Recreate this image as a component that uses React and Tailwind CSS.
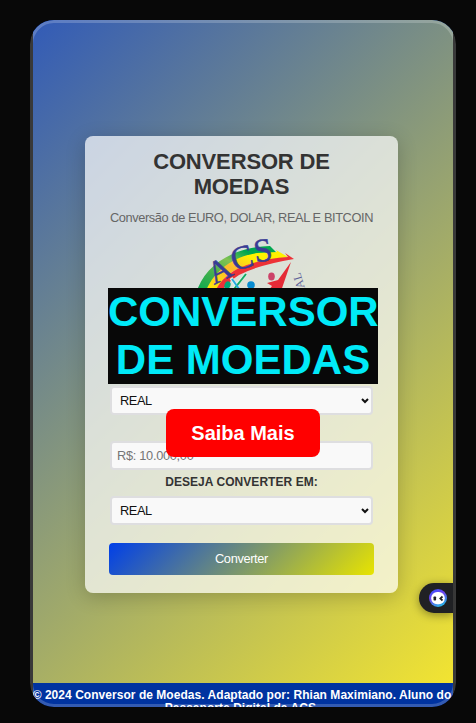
import React from 'react';

function Chevron() {
  return (
    <svg className="h-[6px] w-[8px] shrink-0" viewBox="0 0 8 6" fill="none" stroke="#111" strokeWidth="2">
      <path d="M1 1l3 3 3-3" />
    </svg>
  );
}

function SelectField({ value }) {
  return (
    <div className="flex h-[29px] items-center justify-between rounded-[4px] border-2 border-[#dedee0] bg-[#f9f9f9] pr-[2px] pl-2 text-[12.8px] tracking-[-0.4px] text-[#111]">
      <span>{value}</span>
      <Chevron />
    </div>
  );
}

function Logo() {
  return (
    <svg className="ml-[70px] block h-[120px] w-[140px]" viewBox="180 225 140 120">
      <defs>
        <linearGradient id="leaf" x1="0" y1="1" x2="1" y2="0">
          <stop offset="0" stopColor="#00a650" />
          <stop offset=".3" stopColor="#3fb04c" />
          <stop offset=".55" stopColor="#82c252" />
          <stop offset=".75" stopColor="#00a650" />
        </linearGradient>
        <linearGradient id="sun" x1="0" y1="1" x2="1" y2="0">
          <stop offset="0" stopColor="#fff200" />
          <stop offset=".45" stopColor="#fdb92e" />
          <stop offset=".7" stopColor="#fff200" />
        </linearGradient>
      </defs>
      <path d="M196 294C202 272 220 256 247 249Q260 246 270 246L277 253Q250 255 232 263Q215 272 206 294Z" fill="url(#leaf)" />
      <path d="M205 294C212 272 232 257 257 253L277 252L276 250L288 257Q250 262 232 272Q220 280 216 294Z" fill="url(#sun)" />
      <path d="M214 294Q220 278 239 268Q260 259 288 257L285 253L294 259Q258 265 239 275Q226 283 220 294Z" fill="#ed3237" />
      <path d="M291 262L280 294H266L272 286L267 283L278 280Z" fill="#e52b36" />
      <ellipse cx="271.5" cy="276.5" rx="3.3" ry="4" fill="#cc4269" />
      <ellipse cx="227.5" cy="285" rx="3" ry="4" fill="#00a878" transform="rotate(20 227 285)" />
      <circle cx="251" cy="285" r="3.8" fill="#078bd0" />
      <path d="M246 274L229 294M231 278L242 294" stroke="#d9f3ec" strokeWidth="3.4" />
      <path d="M246 274L231 293" stroke="#16aa62" strokeWidth="2" />
      <path d="M232 279L242 293" stroke="#26a9e0" strokeWidth="2" />
      <g fill="#393b94" stroke="#393b94" strokeWidth=".5" fontFamily="'Liberation Serif', serif">
        <text transform="translate(214 285) rotate(-27)" fontSize="32">A</text>
        <text transform="translate(234 271) rotate(-15)" fontSize="33">C</text>
        <text transform="translate(255.5 262.5) rotate(-9)" fontSize="33">S</text>
      </g>
      <text transform="translate(306 291) rotate(-107)" fontSize="12" fill="#5c5f98" fontFamily="'Liberation Serif', serif">IAL</text>
    </svg>
  );
}

function ChatTab() {
  return (
    <div className="absolute top-[563px] right-[3px] flex h-[30px] w-[34px] items-center rounded-l-full bg-[#202124] pl-[10px] shadow-[0_2px_10px_rgba(0,0,0,0.4)]">
      <svg className="h-[18px] w-[18px]" viewBox="0 0 18 18">
        <defs>
          <linearGradient id="ring" x1="0.2" y1="0" x2="0.7" y2="1">
            <stop offset="0" stopColor="#3652ff" />
            <stop offset=".4" stopColor="#7043ee" />
            <stop offset="1" stopColor="#22bde6" />
          </linearGradient>
        </defs>
        <circle cx="9" cy="9" r="9" fill="url(#ring)" />
        <rect x="2.2" y="3" width="13.6" height="12.2" rx="6" fill="#fff" />
        <rect x="4.5" y="7.5" width="2.6" height="4" rx=".8" fill="#202124" />
        <path d="M13.5 7.5l-2.2 2 2.2 2" stroke="#202124" strokeWidth="1.7" fill="none" />
      </svg>
    </div>
  );
}

export default function App() {
  return (
    <div className="h-[723px] w-[476px] overflow-hidden bg-[#080808] pt-5 pl-[30px] font-['Liberation_Sans',Arial,sans-serif]">
      <div className="relative h-[687px] w-[426px] overflow-hidden rounded-[24px] px-[3px]">
        <div className="h-full overflow-hidden bg-[#0033a0]">
          <main className="h-[663px] bg-[linear-gradient(135deg,#325bb7,#f2e431)] px-[52px] pt-[116px]">
            <section className="h-[457px] w-[313px] rounded-[8px] bg-white/70 px-[25px] pt-[13px] text-center shadow-[0_4px_20px_rgba(0,0,0,0.2)]">
              <h1 className="text-[22px] leading-[25px] font-bold tracking-[-0.15px] text-[#333]">CONVERSOR DE<br />MOEDAS</h1>
              <p className="-mx-2 mt-[11px] text-[12.8px] leading-[15px] tracking-[-0.4px] whitespace-nowrap text-[#666]">Conversão de EURO, DOLAR, REAL E BITCOIN</p>
              <div className="h-[161px]"><Logo /></div>
              <SelectField value="REAL" />
              <div className="mt-[26px] flex h-[29px] items-center rounded-[4px] border-2 border-[#dedee0] bg-[#f9f9f9] px-[5px] text-[12.8px] tracking-[-0.3px] text-[#757575]">R$: 10.000,00</div>
              <p className="mt-[5px] mb-[6px] text-[12px] leading-[15px] font-bold tracking-[0.05px] text-[#333]">DESEJA CONVERTER EM:</p>
              <SelectField value="REAL" />
              <button className="-ml-px mt-[18px] h-8 w-[265px] rounded-[4px] bg-[linear-gradient(135deg,#003fe8,#e8e400)] text-[12.8px] tracking-[-0.35px] text-white">Converter</button>
            </section>
          </main>
          <footer className="-mr-2 -ml-[10px] pt-[6px] text-center text-[12px] leading-[13px] font-bold tracking-[0.04px] whitespace-nowrap text-white">
            © 2024 Conversor de Moedas. Adaptado por: Rhian Maximiano. Aluno do<br />Passaporte Digital da ACS.
          </footer>
        </div>
        <h2 className="absolute top-[268px] left-[78px] h-[96px] w-[270px] bg-[#080808] text-center text-[42px] leading-[48px] font-bold whitespace-nowrap text-[#00eaf8]">CONVERSOR<br />DE MOEDAS</h2>
        <button className="absolute top-[389px] left-[136px] h-12 w-[154px] rounded-[8px] bg-[#ff0000] text-[20px] font-bold text-white">Saiba Mais</button>
        <ChatTab />
        <div className="pointer-events-none absolute inset-0 rounded-[24px] border-[3px] border-white/20" />
      </div>
    </div>
  );
}
